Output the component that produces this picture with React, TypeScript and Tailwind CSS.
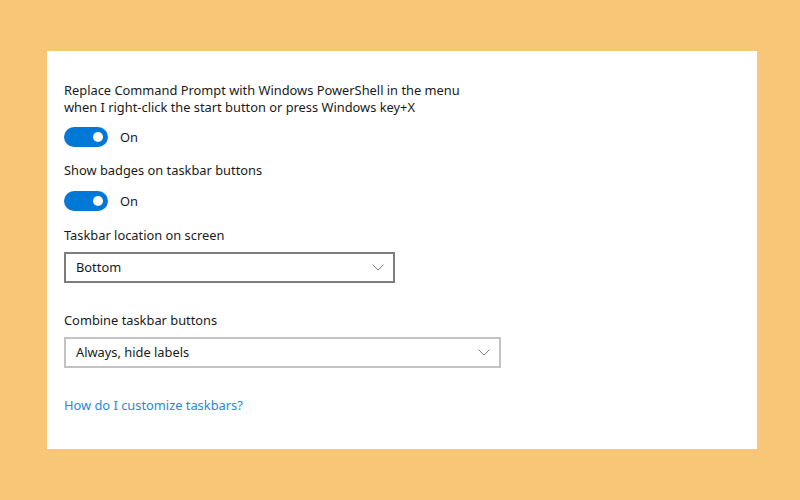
import React from 'react'

function Toggle({ label }: { label: string }) {
  return (
    <div className="flex items-center h-[20px]">
      <div className="relative w-[44px] h-[20px] rounded-full bg-[#0078d7]">
        <div className="absolute right-[5px] top-[5px] w-[10px] h-[10px] rounded-full bg-white" />
      </div>
      <span className="ml-[12px] text-[12.85px] leading-[17px] text-[#1a1a1a]">{label}</span>
    </div>
  )
}

function Chevron() {
  return (
    <svg width="12" height="7" viewBox="0 0 12 7" fill="none">
      <path d="M0.5 0.6 L6 6.1 L11.5 0.6" stroke="#7a7a7a" strokeWidth="1" />
    </svg>
  )
}

function Select({ value, width, border }: { value: string; width: string; border: string }) {
  return (
    <div className={`${width} ${border} h-[31px] border-2 flex items-center justify-between pl-[10px] pr-[9px] bg-white`}>
      <span className="text-[12.85px] leading-[17px] text-[#1a1a1a]">{value}</span>
      <Chevron />
    </div>
  )
}

export default function App() {
  return (
    <div
      className="w-[800px] h-[500px] bg-[#f8c677] pl-[47px] pt-[51px] pr-[43px] pb-[51px]"
      style={{ fontFamily: '"Noto Sans", "Open Sans", sans-serif' }}
    >
      <div className="w-full h-full bg-white flex flex-col items-start pl-[17px] pt-[31px]">
        <p className="text-[12.85px] leading-[17px] text-[#1a1a1a]">
          Replace Command Prompt with Windows PowerShell in the menu
          <br />
          when I right-click the start button or press Windows key+X
        </p>
        <div className="mt-[11px]">
          <Toggle label="On" />
        </div>
        <p className="mt-[15px] text-[12.85px] leading-[17px] text-[#1a1a1a]">Show badges on taskbar buttons</p>
        <div className="mt-[12px]">
          <Toggle label="On" />
        </div>
        <p className="mt-[16px] text-[12.85px] leading-[17px] text-[#1a1a1a]">Taskbar location on screen</p>
        <div className="mt-[8px]">
          <Select value="Bottom" width="w-[331px]" border="border-[#7d7d7d]" />
        </div>
        <p className="mt-[29px] text-[12.85px] leading-[17px] text-[#1a1a1a]">Combine taskbar buttons</p>
        <div className="mt-[8px]">
          <Select value="Always, hide labels" width="w-[437px]" border="border-[#c2c2c2]" />
        </div>
        <a className="mt-[29px] text-[12.85px] leading-[17px] text-[#2a88d8]">How do I customize taskbars?</a>
      </div>
    </div>
  )
}
